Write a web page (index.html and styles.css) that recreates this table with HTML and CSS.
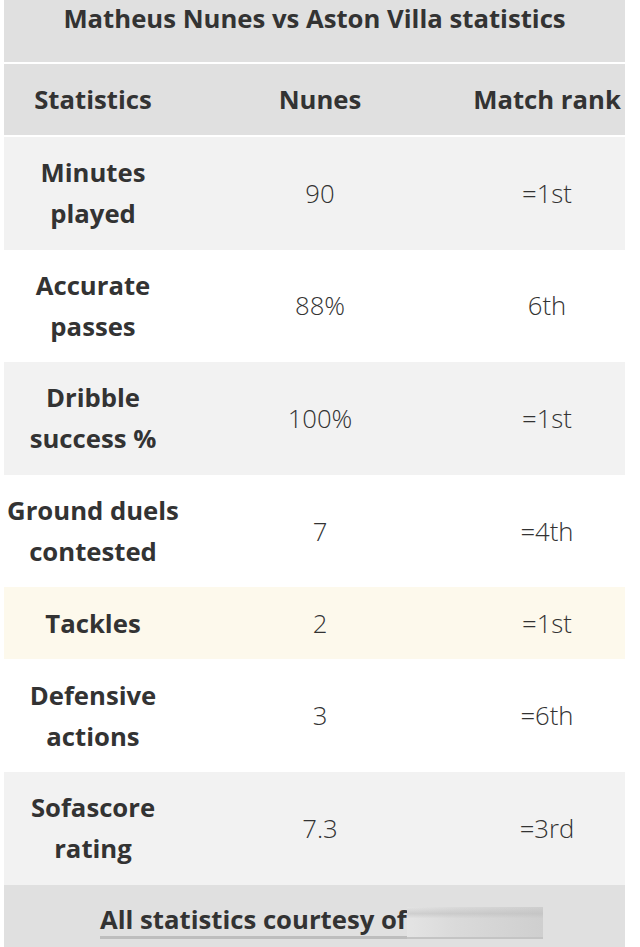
FILE: index.html
```html
<!DOCTYPE html>
<html>
<head>
<meta charset="utf-8">
<link rel="stylesheet" href="styles.css">
</head>
<body>
<div class="table">
  <div class="title">Matheus Nunes vs Aston Villa statistics</div>
  <div class="row head">
    <div class="c1">Statistics</div>
    <div class="c2">Nunes</div>
    <div class="c3">Match rank</div>
  </div>
  <div class="row grey">
    <div class="c1 label">Minutes<br>played</div>
    <div class="c2">90</div>
    <div class="c3">=1st</div>
  </div>
  <div class="row white">
    <div class="c1 label">Accurate<br>passes</div>
    <div class="c2">88%</div>
    <div class="c3">6th</div>
  </div>
  <div class="row grey">
    <div class="c1 label">Dribble<br>success %</div>
    <div class="c2">100%</div>
    <div class="c3">=1st</div>
  </div>
  <div class="row white">
    <div class="c1 label">Ground duels<br>contested</div>
    <div class="c2">7</div>
    <div class="c3">=4th</div>
  </div>
  <div class="row yellow short">
    <div class="c1 label">Tackles</div>
    <div class="c2">2</div>
    <div class="c3">=1st</div>
  </div>
  <div class="row white">
    <div class="c1 label">Defensive<br>actions</div>
    <div class="c2">3</div>
    <div class="c3">=6th</div>
  </div>
  <div class="row grey">
    <div class="c1 label">Sofascore<br>rating</div>
    <div class="c2">7.3</div>
    <div class="c3">=3rd</div>
  </div>
  <div class="footer">
    <span class="courtesy">All statistics courtesy of</span><span class="blur"></span>
  </div>
</div>
</body>
</html>
```
FILE: styles.css
```css
html, body {
  margin: 0;
  padding: 0;
  background: #ffffff;
}
body {
  font-family: "Open Sans", "Noto Sans", sans-serif;
  color: #333333;
  font-size: 25.7px;
  font-weight: 300;
}
.table {
  width: 621px;
  margin-left: 4px;
  display: flex;
  flex-direction: column;
}
.title {
  background: #e0e0e0;
  height: 62px;
  text-align: center;
  font-weight: 700;
  line-height: 38px;
  margin-bottom: 2px;
}
.row {
  display: grid;
  grid-template-columns: 178px 276px 167px;
  align-items: center;
  height: 112.6px;
  line-height: 41px;
}
.row.head {
  height: 71px;
  background: #e0e0e0;
  font-weight: 700;
  margin-bottom: 2px;
}
.row.grey { background: #f2f2f2; }
.row.white { background: #ffffff; }
.row.yellow { background: #fdf9ec; }
.row.short { height: 72px; }
.c1, .c2, .c3 {
  text-align: center;
}
.c3 {
  padding-left: 11px;
}
.label {
  font-weight: 700;
}
.footer {
  background: #e0e0e0;
  height: 62px;
  display: flex;
  align-items: flex-start;
  padding-left: 96px;
  font-weight: 700;
}
.courtesy {
  margin-top: 19px;
  line-height: 32px;
  border-bottom: 3px solid #bdbdbd;
}
.blur {
  display: inline-block;
  width: 136px;
  height: 30px;
  margin-top: 22px;
  background:
    linear-gradient(180deg, rgba(255,255,255,0) 0%, rgba(190,190,190,0.55) 22%, rgba(255,255,255,0) 38%, rgba(255,255,255,0) 100%),
    linear-gradient(90deg, #e4e4e4 0%, #dadada 35%, #d4d4d4 70%, #cfcfcf 100%);
  border-bottom: 2px solid #c4c4c4;
}
```
